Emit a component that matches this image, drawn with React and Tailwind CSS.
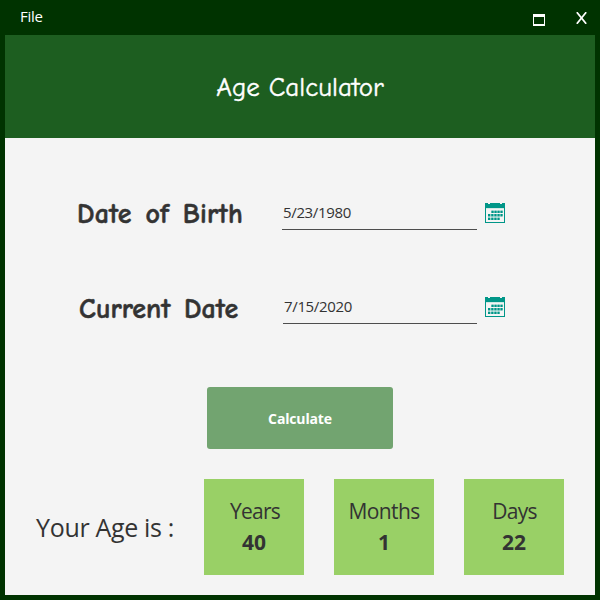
const SANS = "font-['Open_Sans','Noto_Sans',sans-serif]";
const COMIC = "font-['Comic_Sans_MS','Comic_Neue','Lato','Noto_Sans',sans-serif]";

const DOTS = [
  [6.4, 7.6], [9.4, 7.6], [12.4, 7.6], [15.4, 7.6],
  [3, 11], [6.2, 11], [9.3, 11], [12.4, 11], [15.4, 11],
  [3, 14.6], [6.2, 14.6], [9.3, 14.6], [12.4, 14.6],
];

function CalendarIcon() {
  return (
    <svg className="ml-2 size-5 shrink-0" viewBox="0 0 20 20">
      <path fill="#009688" fillRule="evenodd" d="M0 0H20V20H0ZM1 5V19H19V5Z" />
      <path fill="#f4f4f4" d="M3 0H5V1H3ZM15 0H17V1H15Z" />
      <path fill="#cfe8e4" d="M1 5H19V6H1ZM6 8H17V10H6ZM3 11H17V14H3ZM3 15H14V17H3Z" />
      {DOTS.map(([x, y]) => (
        <rect key={`${x}-${y}`} x={x} y={y} width="2.3" height="2.4" fill="#009688" />
      ))}
    </svg>
  );
}

function DateField({ label, value, labelClass, fieldClass }) {
  return (
    <div className="flex h-[34px] items-start">
      <div className={`${COMIC} shrink-0 whitespace-pre text-[28px] leading-[34px] font-bold text-[#333] [-webkit-text-stroke:0.5px_#333] ${labelClass}`}>{label}</div>
      <div className={`${SANS} h-[34px] shrink-0 border-b border-[#4d4d4d] text-[15px] leading-[33px] tracking-[-0.35px] text-[#333] ${fieldClass}`}>{value}</div>
      <div className="pt-[7px]">
        <CalendarIcon />
      </div>
    </div>
  );
}

function Stat({ label, value, labelClass }) {
  return (
    <div className={`${SANS} flex h-24 w-[100px] flex-col items-center bg-[#99d066] pt-[17px] text-[#333]`}>
      <div className={`whitespace-nowrap text-[21px] leading-[31px] ${labelClass}`}>{label}</div>
      <div className="text-[21px] leading-[31px] font-bold">{value}</div>
    </div>
  );
}

export default function App() {
  return (
    <div className={`${SANS} flex h-[600px] w-[600px] flex-col bg-[#003300] px-[5px] pb-[5px]`}>
      <div className="flex h-[35px] items-start text-white">
        <div className="ml-[15px] text-[15px] leading-[32px] tracking-[-0.3px]">File</div>
        <svg className="mt-[14px] mr-[31px] ml-auto h-3 w-3" viewBox="0 0 12 12" shapeRendering="crispEdges">
          <path fill="#fff" fillRule="evenodd" d="M0 0H12V12H0ZM1 3V10H11V3Z" />
        </svg>
        <svg className="mt-3 mr-2 h-3 w-[11px]" viewBox="0 0 11 12">
          <path d="M.8 .2L10.2 11.8M10.2 .2L.8 11.8" stroke="#fff" strokeWidth="1.7" />
        </svg>
      </div>
      <div className="flex h-[103px] items-center justify-center bg-[#1d5e20] pt-0.5">
        <h1 className={`${COMIC} text-[27px] leading-[36px] text-white [-webkit-text-stroke:0.4px_#fff]`}>Age Calculator</h1>
      </div>
      <div className="flex flex-1 flex-col bg-[#f4f4f4] pt-[58px]">
        <DateField label="Date of Birth" value="5/23/1980" labelClass="ml-[72px] w-[205px] pt-px tracking-[0.2px] [word-spacing:3.5px]" fieldClass="w-[195px] pl-px" />
        <div className="h-[60px]" />
        <DateField label="Current Date" value="7/15/2020" labelClass="ml-[74px] w-[204px] pt-0.5 tracking-[0.05px] [word-spacing:3.5px]" fieldClass="w-[194px] pl-px" />
        <button className="mt-[63px] ml-[202px] h-[62px] w-[186px] rounded-[3px] bg-[#72a470] text-[14px] font-bold tracking-[-0.15px] text-white">
          Calculate
        </button>
        <div className="mt-[30px] flex gap-[30px] pl-[31px]">
          <div className="w-[138px] whitespace-nowrap text-[25px] leading-[96px] tracking-[-0.32px] text-[#333]">Your Age is :</div>
          <Stat label="Years" value="40" labelClass="pl-0.5 tracking-[-0.8px]" />
          <Stat label="Months" value="1" labelClass="tracking-[-0.6px]" />
          <Stat label="Days" value="22" labelClass="pl-px tracking-[-0.7px]" />
        </div>
      </div>
    </div>
  );
}
